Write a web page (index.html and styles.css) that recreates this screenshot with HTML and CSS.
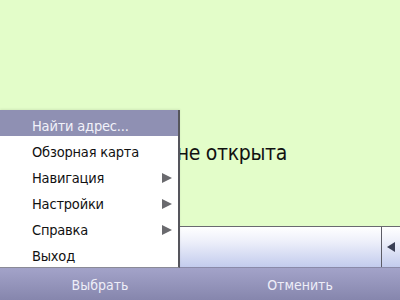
FILE: index.html
```html
<!DOCTYPE html>
<html lang="ru">
<head>
<meta charset="utf-8">
<link rel="stylesheet" href="styles.css">
</head>
<body>
<div class="screen">
  <div class="content">
    <div class="title">Карта не открыта</div>
  </div>
  <div class="panel">
    <div class="track"></div>
    <div class="arrowbox"><span class="arrow-left"></span></div>
  </div>
  <div class="softkeys">
    <div class="key">Выбрать</div>
    <div class="key">Отменить</div>
  </div>
  <ul class="menu">
    <li class="item active">Найти адрес...</li>
    <li class="item">Обзорная карта</li>
    <li class="item sub">Навигация</li>
    <li class="item sub">Настройки</li>
    <li class="item sub">Справка</li>
    <li class="item">Выход</li>
  </ul>
</div>
</body>
</html>
```

FILE: styles.css
```css
html, body {
  margin: 0;
  padding: 0;
}
body {
  width: 400px;
  height: 300px;
  overflow: hidden;
  font-family: "DejaVu Sans Condensed", "DejaVu Sans", sans-serif;
}
.screen {
  position: relative;
  width: 400px;
  height: 300px;
  display: grid;
  grid-template-rows: 226px 41px 33px;
  background: #e3fdc9;
}
.content {
  padding-top: 138px;
  box-sizing: border-box;
}
.title {
  text-align: center;
  font-size: 21px;
  line-height: 30px;
  color: #111;
  letter-spacing: -0.3px;
}
.panel {
  display: flex;
  border-top: 1px solid #6a6a70;
  box-sizing: border-box;
  background: linear-gradient(#ffffff 0%, #eef0fa 35%, #c3cced 100%);
}
.track {
  flex: 1;
}
.arrowbox {
  width: 18px;
  border-left: 1px solid #5c5c66;
  display: flex;
  align-items: center;
  justify-content: center;
}
.arrow-left {
  width: 0;
  height: 0;
  border-top: 5px solid transparent;
  border-bottom: 5px solid transparent;
  border-right: 8px solid #3a3f55;
}
.softkeys {
  display: flex;
  background: linear-gradient(#a3a3c9, #8686ad);
  border-top: 1px solid #8a8aa8;
}
.key {
  flex: 1;
  display: flex;
  align-items: center;
  justify-content: center;
  color: #eeeef8;
  font-size: 14px;
  letter-spacing: 0;
  padding-top: 1px;
}
.menu {
  position: absolute;
  left: 0;
  top: 110px;
  width: 178px;
  margin: 0;
  padding: 0 0 1px 0;
  list-style: none;
  background: #ffffff;
  border-right: 2px solid #55555c;
  border-bottom: 1px solid #8a8a96;
  box-shadow: 0 -1px 2px rgba(0,0,0,0.08);
}
.item {
  position: relative;
  height: 26px;
  padding: 5px 0 0 32px;
  box-sizing: border-box;
  font-size: 14.5px;
  line-height: 22px;
  color: #111;
  letter-spacing: -0.2px;
}
.item.active {
  background: #8f90b3;
  color: #f2f2fa;
}
.item.sub::after {
  content: "";
  position: absolute;
  right: 6px;
  top: 11px;
  width: 0;
  height: 0;
  border-top: 5px solid transparent;
  border-bottom: 5px solid transparent;
  border-left: 10px solid #6a6a6e;
}
```
